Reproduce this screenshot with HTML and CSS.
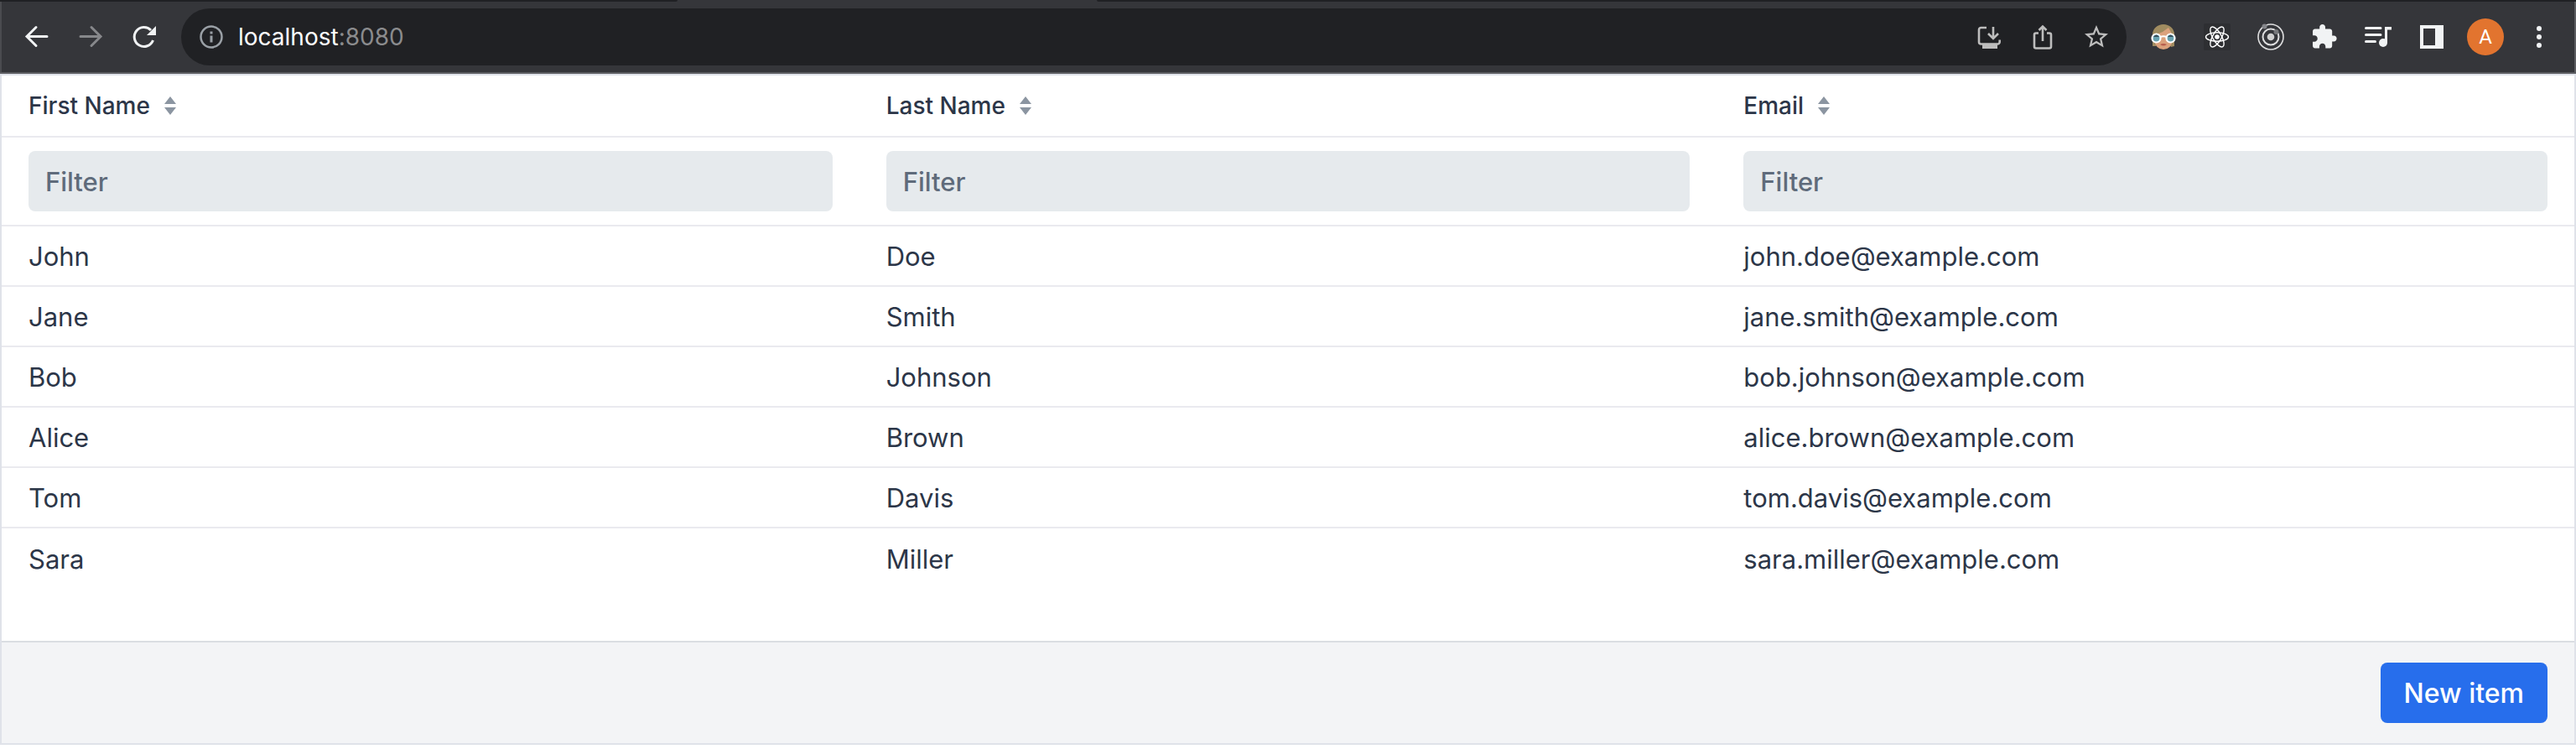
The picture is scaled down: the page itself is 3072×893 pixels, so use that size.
FILE: index.html
```html
<!DOCTYPE html>
<html lang="en">
<head>
<meta charset="utf-8">
<title>localhost:8080</title>
<link rel="stylesheet" href="styles.css">
</head>
<body>
<header class="browser">
  <div class="tab-edge"><span class="tab-inactive"></span><span class="tab-active"></span><span class="tab-rest"></span></div>
  <div class="toolbar">
    <nav class="nav-buttons" aria-label="Navigation">
      <button class="icon-button" aria-label="Back"><svg viewBox="0 0 32 32"><path d="M28 15.500H5M15 4.500L4 15.500L15 26.500" fill="none" stroke="#f1f3f4" stroke-width="3" stroke-linecap="round"/></svg></button>
      <button class="icon-button" aria-label="Forward"><svg viewBox="0 0 32 32"><path d="M4 15.500H27M17 4.500L28 15.500L17 26.500" fill="none" stroke="#87888b" stroke-width="3" stroke-linecap="round"/></svg></button>
      <button class="icon-button" aria-label="Reload"><svg viewBox="0 0 32 32"><path d="M26.500 20A11.500 11.500 0 1 1 24 8" fill="none" stroke="#f1f3f4" stroke-width="3"/><path d="M30 3v11H19z" fill="#f1f3f4"/></svg></button>
    </nav>
    <div class="address-bar">
      <svg class="info" viewBox="0 0 32 32"><circle cx="16" cy="16" r="12.500" fill="none" stroke="#9aa0a6" stroke-width="2.500"/><path d="M14.500 9.500h3v3h-3zM14.500 14.500h3v8h-3z" fill="#9aa0a6"/></svg>
      <div class="url">localhost<span class="port">:8080</span></div>
      <div class="page-actions">
        <button class="icon-button" aria-label="Install app"><svg viewBox="0 0 32 32"><path d="M13 5H6.500A2.500 2.500 0 0 0 4 7.500V22a2.500 2.500 0 0 0 2.500 2.500H26A2.500 2.500 0 0 0 28.700 22v-2.500M21 4v14M15 12l6 6 6-6" fill="none" stroke="#bdbdbd" stroke-width="2.600"/><path d="M8 24h18v6H8z" fill="#bdbdbd"/></svg></button>
        <button class="icon-button" aria-label="Share"><svg viewBox="0 0 32 32"><path d="M11 11.500H8A2 2 0 0 0 6 13.500V27.500a2 2 0 0 0 2 2H24a2 2 0 0 0 2-2V13.500a2 2 0 0 0-2-2H21M16 21V4M11.500 8L16 3.500L20.500 8" fill="none" stroke="#bdbdbd" stroke-width="2.600"/></svg></button>
        <button class="icon-button" aria-label="Bookmark"><svg viewBox="0.57 0.57 22.86 22.86"><path d="M22 9.240l-7.190-.620L12 2 9.190 8.630 2 9.240l5.460 4.730L5.820 21 12 17.270 18.180 21l-1.630-7.030L22 9.240zM12 15.400l-3.760 2.270 1-4.280-3.320-2.880 4.380-.380L12 6.100l1.710 4.040 4.380.380-3.320 2.880 1 4.280L12 15.400z" fill="#bdbdbd"/></svg></button>
      </div>
    </div>
    <div class="extensions">
      <button class="icon-button" aria-label="Glasses extension"><svg viewBox="0 0 32 32"><path d="M3 27V13a13 12 0 0 1 26 0v14l-4 1-3-5H10l-3 4z" fill="#a08c60"/><path d="M5 14l10-4 7-5 5 9v6q-2 11-11 11T5 20z" fill="#dba17c"/><circle cx="7.500" cy="17.500" r="5" fill="#68a2b0" stroke="#fff" stroke-width="2.200"/><circle cx="24.500" cy="17.500" r="5" fill="#68a2b0" stroke="#fff" stroke-width="2.200"/><path d="M4 16q3.500-5 7 0M21 16q3.500-5 7 0" fill="#374e5b"/><path d="M12 16q4-1.500 8 0" fill="none" stroke="#fff" stroke-width="2"/><path d="M12 25q4-2 8 0-4 3-8 0" fill="#b75d4d"/></svg></button>
      <button class="icon-button" aria-label="React developer tools"><svg viewBox="0 0 32 32"><rect width="32" height="32" rx="2" fill="#2e2f32"/><g fill="none" stroke="#fff" stroke-width="1.400"><ellipse cx="16" cy="16" rx="13.500" ry="5.200"/><ellipse cx="16" cy="16" rx="13.500" ry="5.200" transform="rotate(60 16 16)"/><ellipse cx="16" cy="16" rx="13.500" ry="5.200" transform="rotate(120 16 16)"/></g><circle cx="16" cy="16" r="2.800" fill="#fff"/></svg></button>
      <button class="icon-button" aria-label="Orbit extension"><svg viewBox="0 0 32 32"><g fill="none" stroke="#dededf"><circle cx="16" cy="16" r="15" stroke-width="1.600"/><circle cx="16" cy="16" r="9.500" stroke-width="2"/></g><circle cx="16" cy="16" r="4.300" fill="#d0d0d0"/><circle cx="8.500" cy="3.500" r="3" fill="#85868a"/><circle cx="22.500" cy="10" r="3" fill="#77787b"/></svg></button>
      <button class="icon-button" aria-label="Extensions"><svg viewBox="0.5 0.3 23.5 23.5"><path d="M20.500 11H19V7c0-1.100-.9-2-2-2h-4V3.500C13 2.120 11.880 1 10.500 1S8 2.120 8 3.500V5H4c-1.100 0-1.990.9-1.990 2v3.800H3.500c1.490 0 2.700 1.210 2.700 2.700s-1.210 2.700-2.700 2.700H2V20c0 1.100.9 2 2 2h3.800v-1.500c0-1.490 1.210-2.700 2.700-2.700 1.490 0 2.700 1.210 2.700 2.700V22H17c1.100 0 2-.9 2-2v-4h1.500c1.380 0 2.500-1.120 2.500-2.500S21.880 11 20.500 11z" fill="#f1f3f4"/></svg></button>
      <button class="icon-button" aria-label="Media control"><svg viewBox="0 0 32 32"><path d="M1.500 5.500H19M1.500 13.500H19M1.500 21.500H12.500" fill="none" stroke="#f1f3f4" stroke-width="3" stroke-linecap="round"/><circle cx="22" cy="23" r="5" fill="#f1f3f4"/><path d="M24 23V4h8v3.500h-5V23z" fill="#f1f3f4"/></svg></button>
      <button class="icon-button" aria-label="Side panel"><svg viewBox="0 0 32 32"><path d="M2 2h28v28H2zM6 6v20h14V6z" fill="#f1f3f4" fill-rule="evenodd"/></svg></button>
    </div>
    <button class="avatar" aria-label="Profile">A</button>
    <button class="icon-button" aria-label="Menu"><svg viewBox="0 0 32 32"><g fill="#f1f3f4"><circle cx="16" cy="6" r="3"/><circle cx="16" cy="16" r="3"/><circle cx="16" cy="26" r="3"/></g></svg></button>
  </div>
</header>
<main class="crud">
  <table class="grid">
    <thead>
      <tr class="titles">
        <th scope="col"><button class="sorter">First Name<svg viewBox="0 0 16 24"><path d="M1 10L8 1l7 9zM1 14l7 9 7-9z"/></svg></button></th>
        <th scope="col"><button class="sorter">Last Name<svg viewBox="0 0 16 24"><path d="M1 10L8 1l7 9zM1 14l7 9 7-9z"/></svg></button></th>
        <th scope="col"><button class="sorter">Email<svg viewBox="0 0 16 24"><path d="M1 10L8 1l7 9zM1 14l7 9 7-9z"/></svg></button></th>
      </tr>
      <tr class="filters">
        <td><input type="text" placeholder="Filter" aria-label="Filter first name"></td>
        <td><input type="text" placeholder="Filter" aria-label="Filter last name"></td>
        <td><input type="text" placeholder="Filter" aria-label="Filter email"></td>
      </tr>
    </thead>
    <tbody>
      <tr><td>John</td><td>Doe</td><td>john.doe@example.com</td></tr>
      <tr><td>Jane</td><td>Smith</td><td>jane.smith@example.com</td></tr>
      <tr><td>Bob</td><td>Johnson</td><td>bob.johnson@example.com</td></tr>
      <tr><td>Alice</td><td>Brown</td><td>alice.brown@example.com</td></tr>
      <tr><td>Tom</td><td>Davis</td><td>tom.davis@example.com</td></tr>
      <tr><td>Sara</td><td>Miller</td><td>sara.miller@example.com</td></tr>
    </tbody>
  </table>
  <footer class="crud-toolbar"><button class="new-item">New item</button></footer>
</main>
</body>
</html>
```
FILE: styles.css
```css
* {
  box-sizing: border-box;
}

body {
  display: flex;
  flex-direction: column;
  min-height: 100vh;
  margin: 0;
  padding-bottom: 5px;
  background: #fff;
  color: #2c3648;
  font-family: Inter, "Liberation Sans", sans-serif;
  font-size: 31px;
}

button,
input {
  margin: 0;
  padding: 0;
  border: 0;
  background: none;
  color: inherit;
  font: inherit;
}

.browser {
  background: #35363a;
  border-bottom: 2px solid #5b5c60;
}

.tab-edge {
  display: flex;
  height: 2px;
}

.tab-inactive,
.tab-rest {
  background: #202124;
}

.tab-inactive {
  flex: 808;
  border-bottom-right-radius: 2px;
}

.tab-active {
  flex: 500;
}

.tab-rest {
  flex: 1764;
  border-bottom-left-radius: 2px;
}

.toolbar {
  display: flex;
  align-items: center;
  padding: 8px 26px;
  border-left: 2px solid #4a4b4f;
  border-right: 2px solid #5b5c60;
}

.icon-button {
  width: 32px;
  height: 32px;
}

.icon-button svg {
  display: block;
  width: 32px;
  height: 32px;
}

.nav-buttons {
  display: flex;
  gap: 32px;
  margin-right: 28px;
}

.address-bar {
  display: flex;
  flex: 1;
  align-items: center;
  height: 68px;
  padding: 0 20px;
  border-radius: 34px;
  background: #202124;
}

.info {
  width: 32px;
  height: 32px;
  margin-right: 16px;
}

.url {
  flex: 1;
  color: #fff;
  font-size: 28px;
}

.port {
  color: #8a8b8d;
}

.page-actions {
  display: flex;
  gap: 32px;
}

.extensions {
  display: flex;
  gap: 32px;
  margin: 0 26px 0 28px;
}

.avatar {
  width: 44px;
  height: 44px;
  margin-right: 26px;
  border-radius: 50%;
  background: #e2742f;
  color: #fff;
  font-family: Roboto, sans-serif;
  font-size: 24px;
}

.crud {
  display: flex;
  flex: 1;
  flex-direction: column;
  border: 2px solid #dfe2e9;
}

.grid {
  width: 100%;
  border-collapse: separate;
  border-spacing: 0;
  table-layout: fixed;
}

.grid th,
.grid td {
  height: 72px;
  padding: 0 32px;
  border-bottom: 2px solid #eaeaef;
  text-align: left;
}

.grid .titles th {
  height: 74px;
}

.grid .filters td {
  height: 106px;
}

.grid tbody tr:last-child td {
  border-bottom: 0;
}

.sorter {
  display: flex;
  align-items: center;
  gap: 16px;
  font-size: 28px;
  font-weight: 500;
}

.sorter svg {
  width: 16px;
  height: 24px;
  fill: #8b95a1;
}

.filters input {
  display: block;
  width: 100%;
  height: 72px;
  padding: 0 20px;
  border-radius: 8px;
  background: #e6eaed;
  font-weight: 500;
}

.filters input::placeholder {
  color: #5f6b7b;
  opacity: 1;
}

.crud-toolbar {
  display: flex;
  justify-content: flex-end;
  margin-top: auto;
  padding: 24px 32px;
  border-top: 2px solid #dadee2;
  background: #f3f4f6;
}

.new-item {
  height: 72px;
  padding: 0 28px;
  border-radius: 8px;
  background: #276eec;
  color: #fff;
  font-size: 32px;
  font-weight: 500;
}
```
